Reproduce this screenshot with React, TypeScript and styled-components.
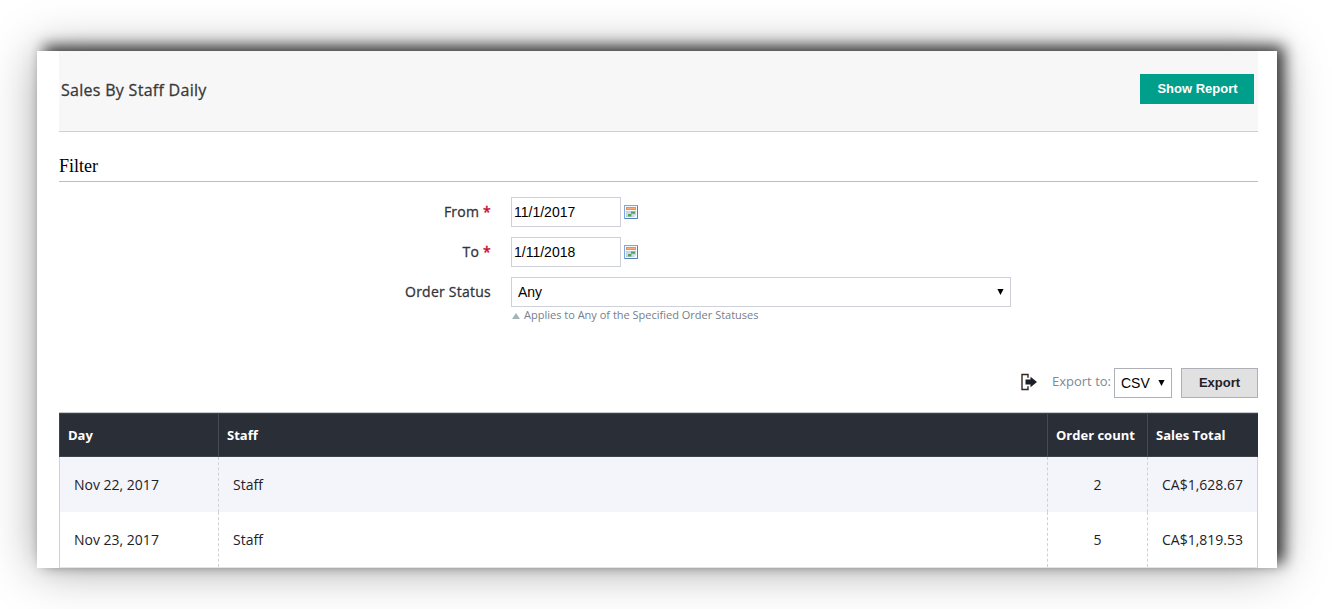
import React from 'react';
import styled, { createGlobalStyle } from 'styled-components';

const GlobalStyle = createGlobalStyle`
  * { box-sizing: border-box; }
  html, body { margin: 0; background: #fff; overflow: hidden; }
  body { font-family: 'Open Sans', 'Noto Sans', sans-serif; color: #1f2229; }
`;

const Page = styled.main`
  width: 1332px;
  height: 609px;
  padding: 51px 55px 41px 37px;
  overflow: hidden;
`;

const Card = styled.section`
  width: 1240px;
  height: 517px;
  padding: 0 19px 0 22px;
  background: #fff;
  box-shadow: 7px -5px 14px rgba(0, 0, 0, 0.75), 0 1px 46px rgba(0, 0, 0, 0.34);
`;

const Header = styled.header`
  display: flex;
  justify-content: space-between;
  align-items: flex-start;
  height: 81px;
  padding: 23px 4px 0 2px;
  background: #f7f7f7;
  border-bottom: 1px solid #cfd0d6;
`;

const Title = styled.h1`
  margin: 4px 0 0;
  font-size: 16px;
  font-weight: 400;
  letter-spacing: 0.29px;
  -webkit-text-stroke: 0.3px #39393a;
  line-height: 24px;
  color: #39393a;
`;

const Button = styled.button<{ $primary?: boolean }>`
  width: ${(p) => (p.$primary ? 114 : 77)}px;
  height: 30px;
  padding: ${(p) => (p.$primary ? '0 0 0 1px' : '0')};
  border: ${(p) => (p.$primary ? '0' : '1px solid #aeb0b8')};
  border-radius: 0;
  background: ${(p) => (p.$primary ? '#009f8b' : '#e1e1e1')};
  color: ${(p) => (p.$primary ? '#fff' : '#1f2229')};
  font: bold 13px/28px 'Liberation Sans', Arial, sans-serif;
`;

const FilterTitle = styled.h2`
  height: 50px;
  margin: 0;
  padding-top: 23px;
  border-bottom: 1px solid #bcbdc0;
  font: 400 18px/22px 'Liberation Serif', 'Times New Roman', serif;
  color: #000;
`;

const Filters = styled.form`
  display: grid;
  grid-template-columns: 432px 500px;
  column-gap: 20px;
  row-gap: 10px;
  padding-top: 15px;
`;

const Label = styled.label`
  text-align: right;
  font-size: 14px;
  font-weight: 400;
  letter-spacing: 0.24px;
  -webkit-text-stroke: 0.3px currentColor;
  line-height: 30px;
  color: #33353a;
`;

const Required = styled.span`
  color: #c8102e;
  font-weight: 600;
`;

const DateField = styled.div`
  display: flex;
  align-items: center;
  gap: 3px;
`;

const DateInput = styled.input`
  width: 110px;
  height: 30px;
  padding: 0 2px;
  border: 1px solid #cfd1da;
  border-radius: 0;
  background: #fff;
  color: #000;
  font: 14px 'Liberation Sans', Arial, sans-serif;
`;

const SelectBox = styled.div<{ $width: number; $dark?: boolean }>`
  display: flex;
  align-items: center;
  justify-content: space-between;
  width: ${(p) => p.$width}px;
  height: 30px;
  padding: 0 6px;
  border: 1px solid ${(p) => (p.$dark ? '#aeb0b8' : '#cfd1da')};
  background: #fff;
  color: #000;
  font: 14px 'Liberation Sans', Arial, sans-serif;
`;

const Hint = styled.div`
  display: flex;
  align-items: center;
  gap: 4px;
  height: 15px;
  padding-left: 1px;
  font-size: 11px;
  line-height: 15px;
  color: #74808c;
  svg { margin-top: 2px; }
`;

const ExportBar = styled.div`
  display: flex;
  align-items: center;
  justify-content: flex-end;
  height: 30px;
  margin-top: 46px;
`;

const ExportLabel = styled.span`
  margin: -4px 3px 0 14px;
  font-size: 13px;
  line-height: 20px;
  color: #7b8996;
`;

const ExportSpacer = styled.div`
  margin-left: 9px;
  display: flex;
`;

const Table = styled.div`
  margin-top: 14px;
  border-top: 1px solid #c5c8cb;
`;

const Row = styled.div<{ $striped?: boolean }>`
  display: grid;
  grid-template-columns: 159px 829px 100px 1fr;
  height: 55px;
  background: ${(p) => (p.$striped ? '#f4f5fb' : '#fff')};
  border-left: 1px solid #cfd1d8;
  border-right: 1px solid #cfd1d8;
  &:last-child { height: 56px; border-bottom: 1px solid #e4e4e8; }
`;

const HeadRow = styled(Row)`
  height: 44px;
  background: #2a2e37;
  border: 1px solid #3e424c;
  border-right-color: #2a2e37;
`;

const HeadCell = styled.div`
  padding-left: 8px;
  border-right: 1px solid #474a54;
  font-size: 13px;
  font-weight: 700;
  line-height: 43px;
  color: #fff;
  &:last-child { border-right: 0; }
`;

const Cell = styled.div<{ $center?: boolean }>`
  padding: 0 14px;
  border-right: 1px dashed #cfd1d8;
  font-size: 14px;
  line-height: 55px;
  text-align: ${(p) => (p.$center ? 'center' : 'left')};
  white-space: nowrap;
  color: #1f2127;
  &:last-child { border-right: 0; }
`;

const Arrow = () => (
  <svg width="7" height="6" viewBox="0 0 7 6"><path d="M.4 0h6.2L3.5 6z" fill="#000" /></svg>
);

const CalendarIcon = () => (
  <svg width="14" height="14" viewBox="0 0 14 14">
    <rect x=".5" y=".5" width="13" height="13" fill="#f4f8fd" stroke="#7ba7dc" />
    <path d="M13.5 1v12.5H1" fill="none" stroke="#557fbd" />
    <path d="M2 2h10v3H2z" fill="#f58b4c" />
    <path d="M3 3h8v1H3z" fill="#f9ad7c" />
    <path d="M2 6h10v6H2z" fill="#b4c6db" />
    <path d="M2 8h10M2 10h10M4 6v6M6 6v6M8 6v6M10 6v6" stroke="#fff" strokeWidth=".4" />
    <path d="M7 6.4h4v2.4H7zM4 9h3.4v2.6H4z" fill="#56a45c" />
    <path d="M13 9v4H9z" fill="#fff" />
    <path d="M9 13l1-3 3-1z" fill="#d5e3f4" />
  </svg>
);

const ExportGlyph = styled.svg`
  margin: -2px 1px 0 0;
`;

const ExportIcon = () => (
  <ExportGlyph width="17" height="18" viewBox="0 0 17 18">
    <path d="M8 4.8V1.5H2v15h6v-3.3" fill="none" stroke="#33251f" strokeWidth="1.4" />
    <path d="M5.5 6.5h5V3.8L17 9l-6.5 5.2v-2.7h-5z" fill="#1d1f26" />
  </ExportGlyph>
);

const rows = [
  { day: 'Nov 22, 2017', staff: 'Staff', count: 2, total: 'CA$1,628.67' },
  { day: 'Nov 23, 2017', staff: 'Staff', count: 5, total: 'CA$1,819.53' },
];

export default function App() {
  return (
    <Page>
      <GlobalStyle />
      <Card>
        <Header>
          <Title>Sales By Staff Daily</Title>
          <Button $primary>Show Report</Button>
        </Header>
        <FilterTitle>Filter</FilterTitle>
        <Filters>
          <Label htmlFor="from">From <Required>*</Required></Label>
          <DateField><DateInput id="from" defaultValue="11/1/2017" /><CalendarIcon /></DateField>
          <Label htmlFor="to">To <Required>*</Required></Label>
          <DateField><DateInput id="to" defaultValue="1/11/2018" /><CalendarIcon /></DateField>
          <Label>Order Status</Label>
          <div>
            <SelectBox $width={500}>Any<Arrow /></SelectBox>
            <Hint>
              <svg width="8" height="6" viewBox="0 0 8 6"><path d="M4 0l4 6H0z" fill="#a3b5b9" /></svg>
              Applies to Any of the Specified Order Statuses
            </Hint>
          </div>
        </Filters>
        <ExportBar>
          <ExportIcon />
          <ExportLabel>Export to:</ExportLabel>
          <SelectBox $width={58} $dark>CSV<Arrow /></SelectBox>
          <ExportSpacer><Button>Export</Button></ExportSpacer>
        </ExportBar>
        <Table>
          <HeadRow>
            <HeadCell>Day</HeadCell>
            <HeadCell>Staff</HeadCell>
            <HeadCell>Order count</HeadCell>
            <HeadCell>Sales Total</HeadCell>
          </HeadRow>
          {rows.map((r, i) => (
            <Row key={r.day} $striped={i % 2 === 0}>
              <Cell>{r.day}</Cell>
              <Cell>{r.staff}</Cell>
              <Cell $center>{r.count}</Cell>
              <Cell>{r.total}</Cell>
            </Row>
          ))}
        </Table>
      </Card>
    </Page>
  );
}
